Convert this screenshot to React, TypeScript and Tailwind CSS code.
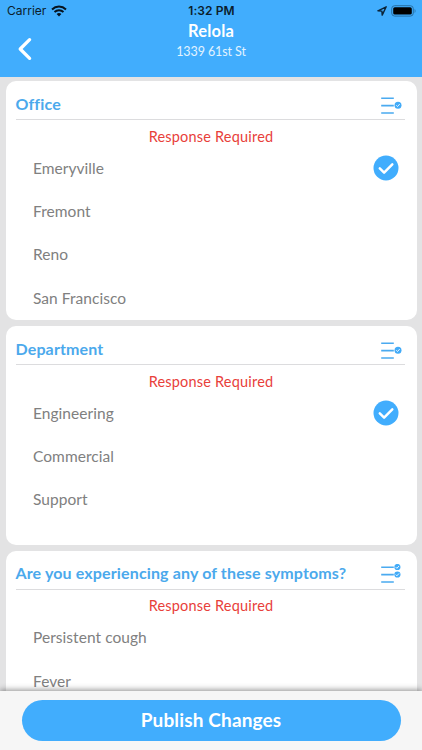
type Question = { title: string; options: string[]; selected?: string; multiple?: boolean; height: string };

const questions: Question[] = [
  { title: 'Office', options: ['Emeryville', 'Fremont', 'Reno', 'San Francisco'], selected: 'Emeryville', height: 'h-[239px]' },
  { title: 'Department', options: ['Engineering', 'Commercial', 'Support'], selected: 'Engineering', height: 'h-[218.5px]' },
  { title: 'Are you experiencing any of these symptoms?', options: ['Persistent cough', 'Fever'], multiple: true, height: 'h-[239px]' },
];

function ListIcon({ multiple }: { multiple?: boolean }) {
  const badges = multiple ? [{ x: 16.4, y: 3 }, { x: 16.4, y: 10.5 }] : [{ x: 17, y: 10.2 }];
  return (
    <svg className="h-[21px] w-[21px] shrink-0" viewBox="0 0 21 21" fill="none">
      <path d="M.2 3.2h12.6M.2 10.6h12.6M.2 18h12.6" stroke="#4aaaf0" strokeWidth="1.6" />
      {badges.map((b) => (
        <g key={b.y} transform={`translate(${b.x} ${b.y})`}>
          <circle r={multiple ? 3.1 : 3.5} fill="#42abf8" />
          <path d="M-1.7.1-.5 1.3 1.7-1.1" stroke="white" strokeWidth=".9" />
        </g>
      ))}
    </svg>
  );
}

function Check() {
  return (
    <svg className="h-[26px] w-[26px]" viewBox="0 0 26 26" fill="none">
      <circle cx="13" cy="13" r="12.5" fill="#41adfd" />
      <path d="m6.8 13.4 4.3 4.2 8.2-8.2" stroke="white" strokeWidth="2.5" strokeLinecap="round" strokeLinejoin="round" />
    </svg>
  );
}

function Card({ q }: { q: Question }) {
  return (
    <section className={`${q.height} shrink-0 rounded-[10px] bg-white`}>
      <div className="mr-[12px] ml-[10px] flex h-[39px] items-center justify-between border-b border-[#dcdcde] pt-[7.4px]">
        <h2 className="text-[16px] leading-5 font-bold tracking-[0.14px] whitespace-nowrap text-[#4ba9ec]">{q.title}</h2>
        <div className="mt-[3px] mr-[3px]"><ListIcon multiple={q.multiple} /></div>
      </div>
      <p className="flex h-[26.6px] items-end justify-center text-[14.5px] leading-5 tracking-[0.2px] text-[#e8403a]">Response Required</p>
      {q.options.map((o) => (
        <div key={o} className="flex h-[43.4px] items-center justify-between pr-[17.5px] pl-[27.5px] text-[15.5px] tracking-[0.05px] text-[#808080]">
          <span>{o}</span>
          {o === q.selected && <Check />}
        </div>
      ))}
    </section>
  );
}

export default function App() {
  return (
    <div className="flex h-[750px] w-[422px] flex-col overflow-hidden bg-[#e3e3e4] font-['Lato','Liberation_Sans',sans-serif]">
      <header className="h-[76.5px] shrink-0 bg-[#41adfd]">
        <div className="grid h-[21px] grid-cols-3 items-center pr-[6px] pl-[7px] font-['Inter','Liberation_Sans',sans-serif] text-[12px] text-[#0b1d2c]">
          <div className="flex items-center gap-[5px]">
            <span>Carrier</span>
            <svg className="h-[12px] w-[16px]" viewBox="0 0 16 12" fill="none" stroke="#06131f">
              <path d="M1 4.4a10.2 10.2 0 0 1 14 0" strokeWidth="2" />
              <path d="M3.5 7a6.6 6.6 0 0 1 9 0" strokeWidth="1.9" />
              <path d="m8 11.5-2.4-2.4a3.5 3.5 0 0 1 4.8 0Z" fill="#06131f" stroke="none" />
            </svg>
          </div>
          <span className="text-center font-semibold tracking-[0.1px]">1:32 PM</span>
          <div className="flex items-center justify-end gap-[4px]">
            <svg className="h-[10px] w-[10px]" viewBox="0 0 10 10" fill="none">
              <path d="M9.2.8.9 4.8l4 .3.3 4Z" stroke="#0b2438" strokeWidth="1.4" strokeLinejoin="round" />
            </svg>
            <svg className="h-[12px] w-[25px]" viewBox="0 0 25 12" fill="none">
              <rect x=".7" y=".7" width="21.6" height="10.4" rx="3" stroke="#2770a5" />
              <rect x="2.2" y="2.2" width="18.6" height="7.4" rx="1.6" fill="#000" />
              <path d="M23.6 4v4c1.2-.5 1.2-3.5 0-4Z" fill="#2770a5" />
            </svg>
          </div>
        </div>
        <div className="grid grid-cols-[40px_1fr_40px] text-white">
          <button aria-label="Back" className="flex justify-center pt-[15px] pl-[9px]">
            <svg className="h-[26px] w-[16px] shrink-0" viewBox="0 0 16 26" fill="none">
              <path d="M12.6 3.7 3.2 13l9.4 9.3" stroke="white" strokeWidth="3.3" strokeLinecap="round" strokeLinejoin="round" />
            </svg>
          </button>
          <div className="text-center">
            <h1 className="text-[16.5px] leading-[21px] font-bold tracking-[0.2px]">Relola</h1>
            <p className="text-[12.5px] leading-[20px] tracking-[-0.1px] text-[#e2f3ff]">1339 61st St</p>
          </div>
        </div>
      </header>
      <main className="flex h-[614px] shrink-0 flex-col gap-[6px] overflow-hidden px-[5.5px] pt-[4.5px]">
        {questions.map((q) => <Card key={q.title} q={q} />)}
      </main>
      <footer className="relative flex flex-1 justify-center bg-[#f6f6f6] pt-[9.5px] shadow-[0_-1px_6px_rgba(0,0,0,0.45)]">
        <button className="h-[40.5px] w-[379px] rounded-full bg-[#41adfd] text-[19px] font-bold tracking-[0.15px] text-white">Publish Changes</button>
      </footer>
    </div>
  );
}
